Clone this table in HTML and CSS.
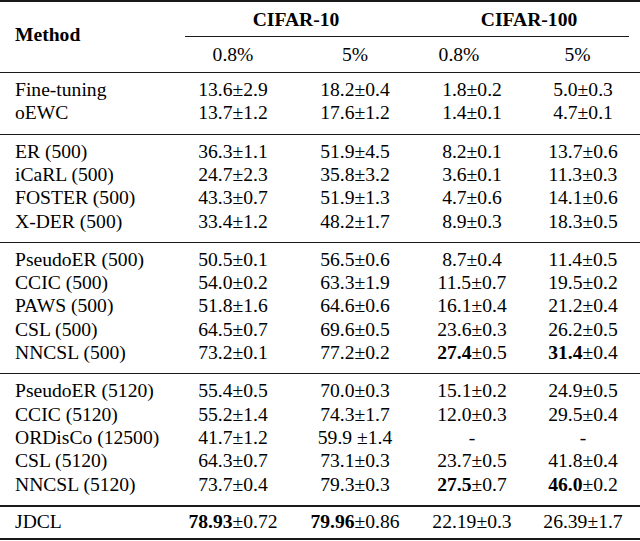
FILE: index.html
```html
<!DOCTYPE html>
<html lang="en">
<head>
<meta charset="utf-8">
<title>Results</title>
<link rel="stylesheet" href="styles.css">
</head>
<body>
<table class="results">
  <colgroup>
    <col class="c-method">
    <col class="c1">
    <col class="c2">
    <col class="c3">
    <col class="c4">
  </colgroup>
  <thead>
    <tr>
      <th class="method" rowspan="2">Method</th>
      <th class="dataset" colspan="2"><div class="span-title first">CIFAR-10</div></th>
      <th class="dataset" colspan="2"><div class="span-title last">CIFAR-100</div></th>
    </tr>
    <tr class="sub">
      <th>0.8%</th>
      <th>5%</th>
      <th class="shift-a">0.8%</th>
      <th class="shift-b">5%</th>
    </tr>
  </thead>
  <tbody class="group">
    <tr><td>Fine-tuning</td><td>13.6±2.9</td><td>18.2±0.4</td><td>1.8±0.2</td><td>5.0±0.3</td></tr>
    <tr><td>oEWC</td><td>13.7±1.2</td><td>17.6±1.2</td><td>1.4±0.1</td><td>4.7±0.1</td></tr>
  </tbody>
  <tbody class="group">
    <tr><td>ER (500)</td><td>36.3±1.1</td><td>51.9±4.5</td><td>8.2±0.1</td><td>13.7±0.6</td></tr>
    <tr><td>iCaRL (500)</td><td>24.7±2.3</td><td>35.8±3.2</td><td>3.6±0.1</td><td>11.3±0.3</td></tr>
    <tr><td>FOSTER (500)</td><td>43.3±0.7</td><td>51.9±1.3</td><td>4.7±0.6</td><td>14.1±0.6</td></tr>
    <tr><td>X-DER (500)</td><td>33.4±1.2</td><td>48.2±1.7</td><td>8.9±0.3</td><td>18.3±0.5</td></tr>
  </tbody>
  <tbody class="group">
    <tr><td>PseudoER (500)</td><td>50.5±0.1</td><td>56.5±0.6</td><td>8.7±0.4</td><td>11.4±0.5</td></tr>
    <tr><td>CCIC (500)</td><td>54.0±0.2</td><td>63.3±1.9</td><td>11.5±0.7</td><td>19.5±0.2</td></tr>
    <tr><td>PAWS (500)</td><td>51.8±1.6</td><td>64.6±0.6</td><td>16.1±0.4</td><td>21.2±0.4</td></tr>
    <tr><td>CSL (500)</td><td>64.5±0.7</td><td>69.6±0.5</td><td>23.6±0.3</td><td>26.2±0.5</td></tr>
    <tr><td>NNCSL (500)</td><td>73.2±0.1</td><td>77.2±0.2</td><td><b>27.4</b>±0.5</td><td><b>31.4</b>±0.4</td></tr>
  </tbody>
  <tbody class="group heavy">
    <tr><td>PseudoER (5120)</td><td>55.4±0.5</td><td>70.0±0.3</td><td>15.1±0.2</td><td>24.9±0.5</td></tr>
    <tr><td>CCIC (5120)</td><td>55.2±1.4</td><td>74.3±1.7</td><td>12.0±0.3</td><td>29.5±0.4</td></tr>
    <tr><td>ORDisCo (12500)</td><td>41.7±1.2</td><td>59.9 ±1.4</td><td>-</td><td>-</td></tr>
    <tr><td>CSL (5120)</td><td>64.3±0.7</td><td>73.1±0.3</td><td>23.7±0.5</td><td>41.8±0.4</td></tr>
    <tr><td>NNCSL (5120)</td><td>73.7±0.4</td><td>79.3±0.3</td><td><b>27.5</b>±0.7</td><td><b>46.0</b>±0.2</td></tr>
  </tbody>
  <tbody class="final">
    <tr><td>JDCL</td><td><b>78.93</b>±0.72</td><td><b>79.96</b>±0.86</td><td>22.19±0.3</td><td>26.39±1.7</td></tr>
  </tbody>
</table>
</body>
</html>
```

FILE: styles.css
```css
html, body {
  margin: 0;
  padding: 0;
  background: #ffffff;
}

body {
  font-family: "Liberation Serif", "Times New Roman", serif;
  font-size: 19.6px;
  line-height: 23.3px;
  color: #000;
}

.results {
  width: 640px;
  table-layout: fixed;
  border-collapse: separate;
  border-spacing: 0;
  border-top: 2px solid #1a1a1a;
  border-bottom: 2px solid #1a1a1a;
}

.c-method { width: 174px; }
.c1 { width: 118px; }
.c2 { width: 126px; }
.c3 { width: 108px; }
.c4 { width: 114px; }

th, td {
  padding: 0;
  text-align: center;
  font-weight: normal;
  white-space: nowrap;
}

th.method {
  text-align: left;
  padding-left: 15px;
  padding-bottom: 4px;
  font-weight: bold;
  vertical-align: middle;
  border-bottom: 1px solid #1a1a1a;
}

th.dataset {
  font-weight: bold;
}

.span-title {
  padding-top: 6px;
  padding-bottom: 5px;
  border-bottom: 1px solid #1a1a1a;
}

.span-title.first { margin-left: 11px; padding-right: 11px; }
.span-title.last { margin-right: 11px; padding-left: 11px; }

tr.sub th {
  padding-top: 6px;
  padding-bottom: 5.5px;
  border-bottom: 1px solid #1a1a1a;
}

tr.sub th.shift-a { padding-right: 26px; }
tr.sub th.shift-b { padding-right: 11px; }

td:first-child {
  text-align: left;
  padding-left: 15px;
}

.group tr:first-child td { padding-top: 5px; }
.group tr:last-child td {
  padding-bottom: 9px;
  border-bottom: 1px solid #1a1a1a;
}
.group.heavy tr:last-child td { border-bottom-width: 2px; }

.final td {
  padding-top: 3.5px;
  padding-bottom: 4.5px;
}

b { font-weight: bold; }
```
